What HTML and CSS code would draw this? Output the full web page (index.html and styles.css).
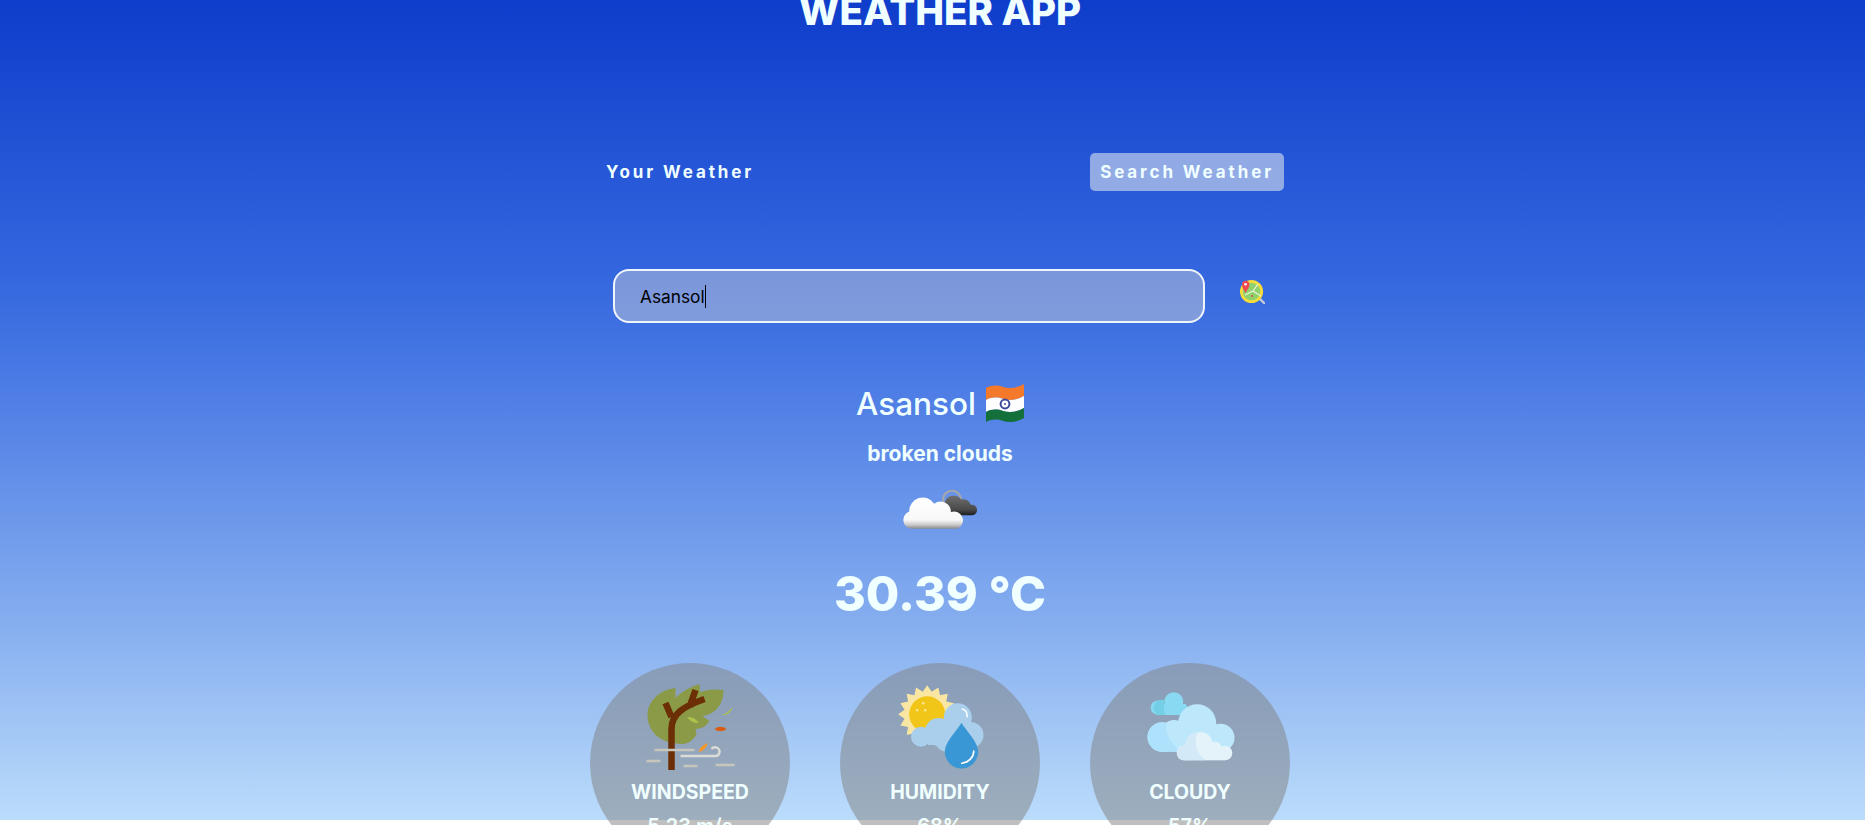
FILE: index.html
```html
<!DOCTYPE html>
<html lang="en">
<head>
  <meta charset="UTF-8">
  <title>Weather App</title>
  <link rel="stylesheet" href="styles.css">
</head>
<body>
  <div class="wrapper">
    <h1>WEATHER APP</h1>

    <div class="tab-container">
      <p class="tab">Your Weather</p>
      <p class="tab current-tab">Search Weather</p>
    </div>

    <form class="form-container">
      <div class="input-box">
        <input type="text" value="Asansol" placeholder="Search for City...">
        <span class="caret"></span>
      </div>
      <button type="button" class="search-btn">
        <svg width="25" height="25" viewBox="0 0 25 25">
          <path d="M18 18l6 6" stroke="#c9ccd6" stroke-width="2.4" stroke-linecap="round"/>
          <circle cx="11.5" cy="12.5" r="10.2" fill="#8fd06f" stroke="#f5dc3a" stroke-width="2.8"/>
          <path d="M5 16l8-4 5-7M13 12l8 5" stroke="#eef3d8" stroke-width="1.2" fill="none"/>
          <circle cx="12" cy="17" r="1" fill="#d8503c"/>
          <path d="M5.500 14C3.500 10.500 2 8.500 2 5.500a3.700 3.700 0 0 1 7.400 0C9.400 8.500 7.500 10.500 5.500 14z" fill="#ef4a4f"/>
          <circle cx="5.500" cy="5.300" r="1.300" fill="#fff"/>
        </svg>
      </button>
    </form>

    <div class="weather-info">
      <div class="city">
        <span>Asansol</span>
        <svg width="38" height="38" viewBox="0 0 38 38">
          <path d="M0 4C6 1 11 1 17 3c7 2 14 1 21-3v12c-7 4-14 5-21 3-6-2-11-2-17 1z" fill="#f4792a"/>
          <path d="M0 16c6-3 11-3 17-1 7 2 14 1 21-3v12c-7 4-14 5-21 3-6-2-11-2-17 1z" fill="#fdfdfd"/>
          <path d="M0 28c6-3 11-3 17-1 7 2 14 1 21-3v10c-7 4-14 5-21 3-6-2-11-2-17 1z" fill="#14703a"/>
          <circle cx="19" cy="20" r="4.400" fill="none" stroke="#3b4a9c" stroke-width="2"/>
          <circle cx="19" cy="20" r="1" fill="#3b4a9c"/>
        </svg>
      </div>
      <p class="desc">broken clouds</p>
      <svg class="weather-icon" width="76" height="42" viewBox="0 0 73 40">
        <defs>
          <linearGradient id="darkCloud" x1="0" y1="0" x2="0" y2="1">
            <stop offset="0" stop-color="#6e6e6e"/>
            <stop offset="0.7" stop-color="#4a4a4a"/>
            <stop offset="1" stop-color="#1c1c1c"/>
          </linearGradient>
          <linearGradient id="whiteCloud" x1="0" y1="0" x2="0" y2="1">
            <stop offset="0" stop-color="#fff"/>
            <stop offset="0.72" stop-color="#f8f8f8"/>
            <stop offset="0.88" stop-color="#c8c8c8"/>
            <stop offset="1" stop-color="#8a8a8a"/>
          </linearGradient>
        </defs>
        <circle cx="48" cy="10" r="8.500" fill="none" stroke="#a8a8a8" stroke-width="2"/>
        <path d="M44 25a6 6 0 0 1-3-12 9 9 0 0 1 16-3 7 7 0 0 1 9 5 5 5 0 0 1 2 10z" fill="url(#darkCloud)"/>
        <path d="M9 38a8.500 8.500 0 0 1-2-16.500A13 13 0 0 1 31 14a10 10 0 0 1 16 8 8 8 0 0 1 6 16z" fill="url(#whiteCloud)"/>
      </svg>
      <p class="temp">30.39 °C</p>
    </div>

    <div class="parameter-container">
      <div class="parameter">
        <svg width="105" height="100" viewBox="-2.500 0 105 100">
          <path d="M35 8v10C42 11 50 7 59 4l.5 8C68 9 76 9 83 10c0 12-6 24-21 26l7 5c-3 5-8 8-14 8l1 6c-4 5-8 9-14 9C18 64 7 50 7 35 7 22 18 10 35 8z" fill="#8a9a47"/>
          <path d="M31 90V49c0-14 10-22 33-30M31 37L25 23M49 27l6-17" fill="none" stroke="#6b2e05" stroke-width="6.500"/>
          <path d="M47 37c5 0 9 2 11 6-5 0-9-2-11-6z" fill="#aec04a"/>
          <path d="M81 35c4-1 8-4 11-8-1 5-6 9-11 8z" fill="#aec04a"/>
          <path d="M74 49c4-3 8-3 12 0-4 3-8 3-12 0z" fill="#d85d12"/>
          <path d="M58 72c1-4 4-7 9-9-1 5-4 8-9 9z" fill="#f5982c"/>
          <path d="M14 70h40M6 81h14M43 86h14M75 85h19" stroke="#c6c6bd" stroke-width="2.500"/>
          <path d="M40 76h36a4.500 4.500 0 1 0-5-7" fill="none" stroke="#dcdcd6" stroke-width="2.500"/>
        </svg>
        <p class="param-label">WINDSPEED</p>
        <p class="param-value">5.23 m/s</p>
      </div>
      <div class="parameter">
        <svg width="105" height="100" viewBox="0 0 105 100">
          <g transform="translate(39.200 34.300)">
            <polygon points="29,0 22.600,4.500 26.800,11.100 19.100,12.800 20.500,20.500 12.800,19.100 11.100,26.800 4.500,22.600 0,29 -4.500,22.600 -11.100,26.800 -12.800,19.100 -20.500,20.500 -19.100,12.800 -26.800,11.100 -22.600,4.500 -29,0 -22.600,-4.500 -26.800,-11.100 -19.100,-12.800 -20.500,-20.500 -12.800,-19.100 -11.100,-26.800 -4.500,-22.600 0,-29 4.500,-22.600 11.100,-26.800 12.800,-19.100 20.500,-20.500 19.100,-12.800 26.800,-11.100 22.600,-4.500" fill="#f9e6a2"/>
            <circle r="18" fill="#f2c618"/>
            <circle cx="-4" cy="-11" r="1.200" fill="#fbe9a8"/>
            <circle cx="-10" cy="-4" r="1.200" fill="#fbe9a8"/>
            <circle cx="-2" cy="-4" r="1.200" fill="#fbe9a8"/>
          </g>
          <g fill="#a9cfec">
            <circle cx="69.800" cy="37.300" r="14"/>
            <circle cx="33" cy="56.700" r="10"/>
            <circle cx="50.800" cy="52" r="14"/>
            <circle cx="82.500" cy="55" r="13"/>
            <circle cx="60" cy="58" r="14"/>
            <rect x="40" y="50" width="43" height="15"/>
          </g>
          <path d="M73.500 42.700C68 52 56.800 62 56.800 71.700a16.700 16.700 0 0 0 33.400 0C90.200 62 79 52 73.500 42.700z" fill="#3a97d6"/>
          <path d="M85.800 71c0 6-5 11.500-12 12.300M74.200 29c3 .5 5 3.500 5 7.700" fill="none" stroke="#fff" stroke-width="1.600" stroke-linecap="round"/>
        </svg>
        <p class="param-label">HUMIDITY</p>
        <p class="param-value">68%</p>
      </div>
      <div class="parameter">
        <svg width="105" height="100" viewBox="0 0 105 100">
          <g fill="#8ad9f3">
            <circle cx="35.800" cy="21.700" r="9.500"/>
            <circle cx="20" cy="27.700" r="7.300"/>
            <circle cx="46" cy="30" r="5"/>
            <rect x="20" y="24" width="28" height="11"/>
          </g>
          <path d="M27 20.500A7.300 7.300 0 0 0 20 35h7c-1.500-5-1.500-10 0-14.500z" fill="#74cfe6"/>
          <g fill="#bde8fb">
            <circle cx="59.200" cy="43.300" r="19"/>
            <circle cx="24.200" cy="57" r="14.700"/>
            <circle cx="36" cy="53" r="13"/>
            <circle cx="82.500" cy="57.700" r="14"/>
            <rect x="24" y="50" width="58" height="21.700"/>
          </g>
          <path d="M24.200 42.300a14.700 14.700 0 0 0 0 29.400H43C33 64 27 54 28.500 43z" fill="#aee2fc"/>
          <g fill="#e4f3fa">
            <circle cx="62.500" cy="64" r="12"/>
            <circle cx="46" cy="73" r="7.300"/>
            <circle cx="87" cy="73" r="7.300"/>
            <circle cx="77" cy="68" r="6.500"/>
            <rect x="46" y="68" width="41" height="12.300"/>
          </g>
          <path d="M60 52c-8 1-12 5-13 13-5 1-7.800 4-7.800 8 0 4 3 7.300 7.300 7.300H68C58 74 55 62 60 52z" fill="#d3e9f7"/>
        </svg>
        <p class="param-label">CLOUDY</p>
        <p class="param-value">57%</p>
      </div>
    </div>
  </div>
</body>
</html>
```

FILE: styles.css
```css
* {
  margin: 0;
  padding: 0;
  box-sizing: border-box;
  font-family: "Inter", "Open Sans", sans-serif;
}

html,
body {
  height: 825px;
  overflow: hidden;
  background: #fff;
}

.wrapper {
  display: flex;
  flex-direction: column;
  align-items: center;
  height: 820px;
  padding-left: 15px;
  color: #f0ffff;
  background: linear-gradient(#0e3dcb 0%, #3366de 33%, #4878e4 45%, #8ab2f0 78%, #bbdcfb 100%);
}

h1 {
  margin-top: -19px;
  font-size: 38.5px;
  line-height: 60px;
  font-weight: 800;
}

.tab-container {
  display: flex;
  justify-content: space-between;
  align-items: center;
  width: 688px;
  margin-top: 112px;
}

.tab {
  padding: 0 10px;
  height: 38px;
  line-height: 38px;
  font-size: 17px;
  font-weight: 700;
  letter-spacing: 2.9px;
  border-radius: 5px;
}

.current-tab {
  background: rgba(219, 226, 239, 0.6);
}

.form-container {
  display: flex;
  align-items: center;
  justify-content: space-between;
  width: 654px;
  margin-top: 78px;
}

.input-box {
  position: relative;
  width: 592px;
  height: 54px;
}

.input-box input {
  width: 100%;
  height: 100%;
  padding: 0 25px;
  color: #000;
  font-size: 17.3px;
  background: rgba(210, 210, 215, 0.45);
  border: 2px solid #f0f4fb;
  border-radius: 16px;
  outline: none;
}

.caret {
  position: absolute;
  left: 92px;
  top: 16px;
  width: 1px;
  height: 23px;
  background: #000;
}

.search-btn {
  display: flex;
  margin-top: -9px;
  margin-right: 2px;
  background: none;
  border: none;
}

.weather-info {
  display: flex;
  flex-direction: column;
  align-items: center;
  margin-top: 56px;
}

.city {
  display: flex;
  align-items: center;
  gap: 10px;
  height: 48px;
  font-size: 31.5px;
  font-weight: 500;
}

.desc {
  margin-top: 12px;
  font-size: 21px;
  line-height: 30px;
  font-weight: 700;
}

.weather-icon {
  margin-top: 20px;
}

.temp {
  margin-top: 31px;
  font-size: 48.5px;
  line-height: 64px;
  font-weight: 800;
}

.parameter-container {
  display: flex;
  gap: 50px;
  margin-top: 37px;
}

.parameter {
  display: flex;
  flex-direction: column;
  align-items: center;
  flex-shrink: 0;
  width: 200px;
  height: 200px;
  padding-top: 17px;
  border-radius: 50%;
  background: rgba(128, 128, 128, 0.5);
}

.param-label {
  margin-top: -3px;
  font-size: 19.5px;
  line-height: 30px;
  font-weight: 700;
}

.param-value {
  margin-top: 3px;
  font-size: 20px;
  line-height: 32px;
  font-weight: 600;
}
```
